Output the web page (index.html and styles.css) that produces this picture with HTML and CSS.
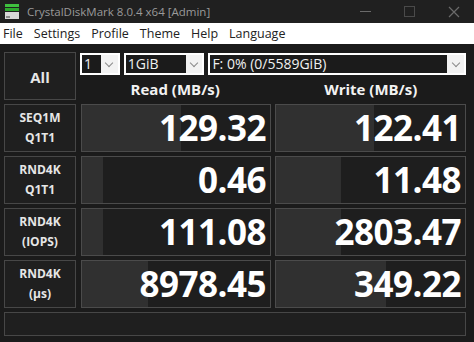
FILE: index.html
```html
<!DOCTYPE html>
<html lang="en">
<head>
    <meta charset="UTF-8">
    <title>CrystalDiskMark 8.0.4 x64 [Admin]</title>
    <link rel="stylesheet" href="styles.css">
</head>
<body>
    <div class="window">
        <div class="titlebar">
            <svg class="app-icon" width="16" height="16" viewBox="0 0 16 16">
                <rect x="1" y="0" width="14" height="3" fill="#3fbf3f"/>
                <rect x="1" y="4" width="14" height="3" fill="#2ea82e"/>
                <rect x="1" y="8" width="14" height="7" fill="#d8d8d8"/>
                <rect x="2" y="12" width="4" height="2" fill="#8a8a8a"/>
            </svg>
            <span class="title">CrystalDiskMark 8.0.4 x64 [Admin]</span>
            <div class="controls">
                <span class="ctl ctl-min"></span>
                <span class="ctl ctl-max"></span>
                <svg class="ctl-close" width="12" height="12" viewBox="0 0 12 12">
                    <path d="M1 1L11 11M11 1L1 11" stroke="#6a6a6a" stroke-width="1.2"/>
                </svg>
            </div>
        </div>
        <div class="menubar">
            <span>File</span>
            <span>Settings</span>
            <span>Profile</span>
            <span>Theme</span>
            <span>Help</span>
            <span>Language</span>
        </div>
        <div class="main">
            <div class="grid">
                <div class="label all">All</div>
                <div class="top">
                    <div class="selects">
                        <div class="combo c-count"><span class="sel">1</span><span class="chev"></span></div>
                        <div class="combo c-size"><span class="sel">1GiB</span><span class="chev"></span></div>
                        <div class="combo c-drive"><span class="sel">F: 0% (0/5589GiB)</span><span class="chev"></span></div>
                    </div>
                    <div class="heads">
                        <div class="head">Read (MB/s)</div>
                        <div class="head">Write (MB/s)</div>
                    </div>
                </div>

                <div class="label">SEQ1M<br>Q1T1</div>
                <div class="cell"><div class="fill" style="width:99px"></div><span class="val">129.32</span></div>
                <div class="cell"><div class="fill" style="width:98px"></div><span class="val">122.41</span></div>

                <div class="label">RND4K<br>Q1T1</div>
                <div class="cell"><div class="fill" style="width:21px"></div><span class="val">0.46</span></div>
                <div class="cell"><div class="fill" style="width:65px"></div><span class="val">11.48</span></div>

                <div class="label">RND4K<br>(IOPS)</div>
                <div class="cell"><div class="fill" style="width:21px"></div><span class="val">111.08</span></div>
                <div class="cell"><div class="fill" style="width:65px"></div><span class="val">2803.47</span></div>

                <div class="label">RND4K<br>(&micro;s)</div>
                <div class="cell"><div class="fill" style="width:66px"></div><span class="val">8978.45</span></div>
                <div class="cell"><div class="fill" style="width:110px"></div><span class="val">349.22</span></div>

                <div class="comment"></div>
            </div>
        </div>
    </div>
</body>
</html>
```
FILE: styles.css
```css
html, body {
    margin: 0;
    background-color: #1b1b1b;
}
body {
    width: 474px;
    height: 342px;
    overflow: hidden;
    font-family: "Open Sans", "Noto Sans", sans-serif;
}
.titlebar {
    height: 23px;
    background-color: #202020;
    display: flex;
    align-items: center;
    padding-left: 4px;
}
.app-icon {
    margin-right: 7px;
}
.title {
    color: #9a9a9a;
    font-size: 11.5px;
}
.controls {
    margin-left: auto;
    display: flex;
    align-items: center;
    gap: 33px;
    padding-right: 14px;
}
.ctl {
    display: block;
}
.ctl-min {
    width: 11px;
    height: 1px;
    background-color: #6a6a6a;
}
.ctl-max {
    width: 9px;
    height: 9px;
    border: 1px solid #4a4a4a;
}
.menubar {
    height: 21px;
    background-color: #ffffff;
    display: flex;
    align-items: center;
    padding-left: 3px;
    gap: 11px;
    font-size: 12.5px;
    color: #222;
}
.main {
    padding: 8px 0 0 4px;
}
.grid {
    display: grid;
    grid-template-columns: 72px 191px 191px;
    grid-template-rows: repeat(5, 48px) 24px;
    column-gap: 4px;
    row-gap: 4px;
}
.label {
    box-sizing: border-box;
    border: 1px solid #474747;
    background-color: #1f1f1f;
    color: #e6e6e6;
    font-weight: 700;
    font-size: 12px;
    line-height: 20px;
    text-align: center;
    display: flex;
    align-items: center;
    justify-content: center;
}
.label.all {
    font-size: 15px;
    padding-top: 2px;
}
.top {
    grid-column: 2 / 4;
    display: flex;
    flex-direction: column;
}
.selects {
    display: flex;
    gap: 4px;
    margin-top: 1px;
    height: 22px;
}
.combo {
    box-sizing: border-box;
    background-color: #f2f2f2;
    border: 2px solid #ffffff;
    display: flex;
    align-items: stretch;
}
.sel {
    background-color: #1b1b1b;
    color: #f0f0f0;
    font-size: 14px;
    line-height: 18px;
    padding-left: 2px;
    overflow: hidden;
    white-space: nowrap;
}
.chev {
    flex: 1;
    position: relative;
}
.chev::after {
    content: "";
    position: absolute;
    left: 50%;
    top: 5px;
    width: 5px;
    height: 5px;
    margin-left: -3px;
    border-right: 1px solid #8a8a8a;
    border-bottom: 1px solid #8a8a8a;
    transform: rotate(45deg);
}
.c-count { width: 40px; }
.c-count .sel { width: 17px; }
.c-size { width: 81px; }
.c-size .sel { width: 58px; }
.c-drive { width: 259px; }
.c-drive .sel { width: 235px; }
.heads {
    display: flex;
    gap: 5px;
    margin-top: 4px;
}
.head {
    width: 191px;
    text-align: center;
    color: #f2f2f2;
    font-weight: 700;
    font-size: 15px;
    line-height: 20px;
}
.grid > .cell:nth-child(3n+1) {
    margin-left: 1px;
}
.cell {
    box-sizing: border-box;
    position: relative;
    border: 1px solid #4b4b4b;
    background-color: #1e1e1e;
    display: flex;
    align-items: center;
    justify-content: flex-end;
    padding-right: 4px;
    overflow: hidden;
}
.fill {
    position: absolute;
    left: 0;
    top: 0;
    bottom: 0;
    background-color: #303030;
}
.val {
    position: relative;
    color: #ffffff;
    font-weight: 700;
    font-size: 35px;
    letter-spacing: -0.5px;
    line-height: 48px;
}
.comment {
    grid-column: 1 / 4;
    box-sizing: border-box;
    border: 1px solid #474747;
    background-color: #1f1f1f;
}
```
